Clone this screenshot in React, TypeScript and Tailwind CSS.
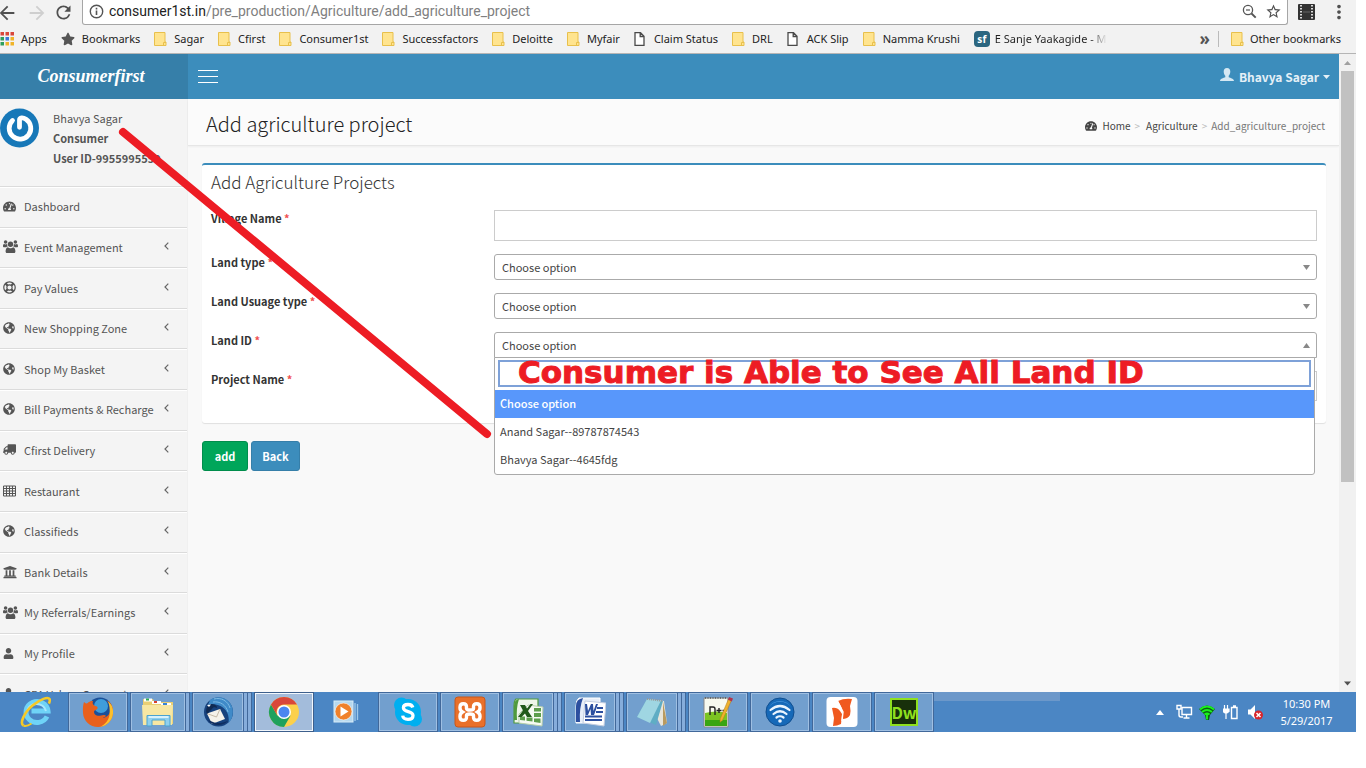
import type { ReactNode } from "react";
import {
  FaTachometerAlt,
  FaRegLifeRing,
  FaGlobeAmericas,
  FaTruck,
  FaUniversity,
  FaUser,
  FaStar,
} from "react-icons/fa";
import { MdArrowBack, MdArrowForward, MdRefresh, MdStarBorder, MdMoreVert } from "react-icons/md";

function FolderIcon() {
  return (
    <svg className="h-[14px] w-[13px] shrink-0" viewBox="0 0 13 14">
      <path d="M.5.5h10.500v9.500h1v3.500H.5z" fill="#ffe48f" stroke="#e8c04c" />
      <path d="M9.500 13.500v-3h2.500" fill="none" stroke="#e8c04c" />
    </svg>
  );
}

function PageIcon() {
  return (
    <svg className="h-[14px] w-[13px] shrink-0" viewBox="0 0 13 14">
      <path d="M1 .7h5.500L10 4.200v9.100H1zM6.200.7v3.800H10" fill="#fff" stroke="#4a4a4a" strokeWidth="1.300" />
    </svg>
  );
}

function AppsIcon() {
  const colors = ["#d9473b", "#d9473b", "#d9473b", "#2f9e5b", "#3b78d8", "#f0b429", "#2f9e5b", "#f0b429", "#f0b429"];
  return (
    <svg className="h-[14px] w-[14px] shrink-0" viewBox="0 0 14 14">
      {colors.map((c, i) => (
        <rect key={i} x={(i % 3) * 5 + 0.5} y={Math.floor(i / 3) * 5} width="3.500" height="3.500" fill={c} />
      ))}
    </svg>
  );
}

function SfIcon() {
  return (
    <span className="flex size-4 shrink-0 items-center justify-center rounded-sm bg-[#2b6680] text-[10px] leading-none font-bold text-white">
      sf
    </span>
  );
}

function GridIcon() {
  return (
    <svg className="h-3 w-[13px]" viewBox="0 0 13 12">
      <path
        d="M.5 1h12v10H.5zM.5 3.500h12M.5 6h12M.5 8.500h12M3.500 1v10M6.500 1v10M9.500 1v10"
        fill="none"
        stroke="#555"
      />
    </svg>
  );
}

function UsersIcon() {
  return (
    <svg className="h-[13px] w-[15px]" viewBox="0 0 15 13" fill="#555">
      <circle cx="7.500" cy="4.300" r="2.700" />
      <path d="M4 13c-1 0-1.400-.7-1.400-1.500 0-2 .6-4.300 2.300-4.300.8.8 1.700 1 2.600 1s1.800-.2 2.600-1c1.700 0 2.300 2.300 2.300 4.300 0 .8-.4 1.500-1.400 1.500z" />
      <circle cx="2.600" cy="2" r="1.800" />
      <circle cx="12.400" cy="2" r="1.800" />
      <path d="M0 6.300C0 4.900.4 4 1.100 4c.8.6 2 .6 2.900.1 0 1 .3 1.700.8 2.300-.9.1-1.400.4-1.700.9H1.200C.4 7.300 0 7 0 6.300z" />
      <path d="M15 6.300c0-1.400-.4-2.300-1.100-2.300-.8.6-2 .6-2.900.1 0 1-.3 1.700-.8 2.300.9.1 1.400.4 1.700.9h1.900c.8 0 1.200-.3 1.200-1z" />
    </svg>
  );
}

const bookmarks: { label: string; icon: ReactNode }[] = [
  { label: "Apps", icon: <AppsIcon /> },
  { label: "Bookmarks", icon: <FaStar className="size-[14px] text-[#555]" /> },
  { label: "Sagar", icon: <FolderIcon /> },
  { label: "Cfirst", icon: <FolderIcon /> },
  { label: "Consumer1st", icon: <FolderIcon /> },
  { label: "Successfactors", icon: <FolderIcon /> },
  { label: "Deloitte", icon: <FolderIcon /> },
  { label: "Myfair", icon: <FolderIcon /> },
  { label: "Claim Status", icon: <PageIcon /> },
  { label: "DRL", icon: <FolderIcon /> },
  { label: "ACK Slip", icon: <PageIcon /> },
  { label: "Namma Krushi", icon: <FolderIcon /> },
];

function BrowserChrome() {
  return (
    <header className="flex h-[54px] shrink-0 flex-col border-b border-[#b5b5b5] bg-[#f2f2f2] font-['Noto_Sans',sans-serif]">
      <div className="flex h-[25px] items-center text-[#505050]">
        <div className="flex h-[22px] w-[82px] items-center">
          <button aria-label="Back" className="-ml-1 w-[30px]">
            <MdArrowBack className="size-[22px]" />
          </button>
          <button aria-label="Forward" className="w-[27px] text-[#cfcfcf]">
            <MdArrowForward className="size-[22px]" />
          </button>
          <button aria-label="Reload">
            <MdRefresh className="size-[21px]" />
          </button>
        </div>
        <div className="flex h-full grow items-center rounded-b-[3px] border border-t-0 border-[#a6a6a6] bg-white pr-[5px] pb-0.5 pl-1.5">
          <svg className="size-[15px] shrink-0" viewBox="0 0 15 15">
            <circle cx="7.500" cy="7.500" r="6.200" fill="none" stroke="#555" strokeWidth="1.400" />
            <path d="M7.500 6.500v4.500M7.500 3.800v1.600" stroke="#555" strokeWidth="1.600" />
          </svg>
          <p className="grow pl-[5px] font-[Roboto,sans-serif] text-[14px] leading-5 text-[#808080]">
            <span className="text-[#222]">consumer1st.in</span>/pre_production/Agriculture/add_agriculture_project
          </p>
          <button aria-label="Zoom" className="mr-2">
            <svg className="size-[15px]" viewBox="0 0 15 15">
              <circle cx="6" cy="6" r="4.600" fill="none" stroke="#555" strokeWidth="1.300" />
              <path d="M9.500 9.500l4.200 4.200" stroke="#555" strokeWidth="1.900" />
              <path d="M4 6h4" stroke="#555" strokeWidth="1.200" />
            </svg>
          </button>
          <button aria-label="Bookmark this page">
            <MdStarBorder className="size-[17px]" />
          </button>
        </div>
        <div className="flex w-[68px] items-center justify-between pb-0.5 pl-2.5">
          <button aria-label="Extension">
            <svg className="h-4 w-[17px]" viewBox="0 0 17 16">
              <rect width="17" height="16" rx="1" fill="#333" />
              <path d="M3 1v15M14 1v15" stroke="#eee" strokeWidth="1.800" strokeDasharray="1.600 1.400" />
              <path d="M5 8h7" stroke="#666" />
            </svg>
          </button>
          <button aria-label="Menu" className="mr-1.5">
            <MdMoreVert className="size-[22px]" />
          </button>
        </div>
      </div>
      <nav aria-label="Bookmarks" className="flex grow items-center text-[11px] leading-4 text-[#222]">
        <ul className="flex grow items-center gap-[14px] whitespace-nowrap">
          {bookmarks.map((b) => (
            <li key={b.label}>
              <a href="#" className="flex items-center gap-[7px]">
                {b.icon}
                {b.label}
              </a>
            </li>
          ))}
          <li>
            <a href="#" className="flex items-center gap-[5px]">
              <SfIcon />
              <span className="bg-linear-to-r from-[#222] from-85% to-transparent bg-clip-text text-transparent">
                E Sanje Yaakagide - M
              </span>
            </a>
          </li>
        </ul>
        <button aria-label="More bookmarks" className="mr-2 text-[17px] leading-4 font-bold text-[#555]">
          »
        </button>
        <a href="#" className="mr-[15px] flex items-center gap-1.5 border-l border-[#bbb] pl-3">
          <FolderIcon />
          Other bookmarks
        </a>
      </nav>
    </header>
  );
}

const menu: { label: string; icon: ReactNode; leaf?: boolean }[] = [
  { label: "Dashboard", icon: <FaTachometerAlt className="size-[13px]" />, leaf: true },
  { label: "Event Management", icon: <UsersIcon /> },
  { label: "Pay Values", icon: <FaRegLifeRing className="size-[13px]" /> },
  { label: "New Shopping Zone", icon: <FaGlobeAmericas className="size-3" /> },
  { label: "Shop My Basket", icon: <FaGlobeAmericas className="size-3" /> },
  { label: "Bill Payments & Recharge", icon: <FaGlobeAmericas className="size-3" /> },
  { label: "Cfirst Delivery", icon: <FaTruck className="size-[13px] -scale-x-100" /> },
  { label: "Restaurant", icon: <GridIcon /> },
  { label: "Classifieds", icon: <FaGlobeAmericas className="size-3" /> },
  { label: "Bank Details", icon: <FaUniversity className="size-[14px]" /> },
  { label: "My Referrals/Earnings", icon: <UsersIcon /> },
  { label: "My Profile", icon: <FaUser className="size-[11px]" /> },
  { label: "CPA Values Comparison", icon: <FaUser className="size-[11px]" /> },
];

function Sidebar() {
  return (
    <aside className="w-[188px] shrink-0 overflow-hidden border-r border-[#f0f0f0] bg-[#f4f4f4] text-[11px] text-[#555]">
      <div className="flex h-[88px] gap-[13px] border-b border-[#dbdbdb] pt-[9px]">
        <svg className="size-10 shrink-0" viewBox="0 0 40 40">
          <circle cx="19.500" cy="20" r="19.500" fill="#1778b8" />
          <path
            d="M12.500 12.500a10.800 10.800 0 1 0 13.500-1.200c-3-2-6.500-2-6.500 1v7"
            fill="none"
            stroke="#fff"
            strokeWidth="4.800"
            strokeLinecap="round"
          />
        </svg>
        <div className="leading-5 whitespace-nowrap">
          <p>Bhavya Sagar</p>
          <p className="font-bold">Consumer</p>
          <p className="font-bold">User ID-9955995559</p>
        </div>
      </div>
      <ul className="grid h-[528px] auto-rows-fr">
        {menu.map((m) => (
          <li key={m.label} className="border-t border-b border-t-white border-b-[#dbdbdb]">
            <a href="#" className="flex h-full items-center pb-0.5 whitespace-nowrap">
              <span className="flex w-6 shrink-0 pl-[3px]">{m.icon}</span>
              <span className="grow leading-5">{m.label}</span>
              {!m.leaf && (
                <svg className="mr-[18px] mb-0.5 h-2 w-[5px] shrink-0" viewBox="0 0 5 8">
                  <path d="M4.300.7L1 4l3.300 3.300" fill="none" stroke="#666" strokeWidth="1.200" />
                </svg>
              )}
            </a>
          </li>
        ))}
      </ul>
    </aside>
  );
}

function Label({ id, text }: { id: string; text: string }) {
  return (
    <label htmlFor={id} className="w-[283px] shrink-0 leading-4 font-bold text-[#333]">
      {text} <span className="text-[#f05050]">*</span>
    </label>
  );
}

function SelectField({ id, text, open, children }: { id: string; text: string; open?: boolean; children?: ReactNode }) {
  return (
    <div className="flex">
      <Label id={id} text={text} />
      <div className="relative grow">
        <select
          id={id}
          className={
            open
              ? "h-[26px] w-full appearance-none rounded-t-[3px] border border-[#aaa] bg-white pl-[7px] leading-5 text-[#444]"
              : "h-[26px] w-full appearance-none rounded-[3px] border border-[#aaa] bg-white pl-[7px] leading-5 text-[#444]"
          }
        >
          <option>Choose option</option>
        </select>
        <svg className="pointer-events-none absolute top-[11px] right-[7px] h-[5px] w-[7px]" viewBox="0 0 7 5">
          <path d={open ? "M0 5h7L3.500 0z" : "M0 0h7L3.500 5z"} fill="#888" />
        </svg>
        {children}
      </div>
    </div>
  );
}

function LandIdMenu() {
  return (
    <div className="absolute top-[25px] right-[2px] left-0 z-10 rounded-b-[3px] border border-[#aaa] bg-white">
      <div className="relative mx-[3px] mt-[2px] mb-[3px]">
        <input
          type="search"
          aria-label="Search land ID"
          className="block h-[27px] w-full border-2 border-[#7ea1d8] bg-white px-1 outline-none"
        />
        <span className="absolute top-0 left-5 font-['DejaVu_Sans',sans-serif] text-[31px] leading-6 font-bold whitespace-nowrap text-[#ed1c24] [-webkit-text-stroke:1px_#ed1c24]">
          Consumer is Able to See All Land ID
        </span>
      </div>
      <ul role="listbox" aria-label="Land ID options" className="leading-[26px] text-[#444]">
        <li role="option" aria-selected="true" className="h-7 bg-[#5897fb] pl-[5px] font-medium text-white">
          Choose option
        </li>
        <li role="option" aria-selected="false" className="h-7 pl-[5px]">
          Anand Sagar--89787874543
        </li>
        <li role="option" aria-selected="false" className="h-7 pl-[5px]">
          Bhavya Sagar--4645fdg
        </li>
      </ul>
    </div>
  );
}

function Content() {
  return (
    <main className="min-w-0 grow bg-[#f9f9f9]">
      <div className="flex h-[47px] items-center justify-between border-b border-[#e6e6e6] bg-[#fbfbfb] pr-[14px] pl-[18px] shadow-xs">
        <h1 className="mt-1 text-[20px] leading-6 font-light text-[#222]">Add agriculture project</h1>
        <nav aria-label="Breadcrumb" className="mt-2 text-[10px] leading-4 text-[#444]">
          <ol className="flex items-center">
            <li className="flex items-center">
              <FaTachometerAlt className="mr-[5px] size-3" />
              <a href="#">Home</a>
              <span className="mr-1.5 ml-1 text-[#bbb]">&gt;</span>
            </li>
            <li>
              <a href="#">Agriculture</a>
              <span className="mr-1 ml-1 text-[#bbb]">&gt;</span>
            </li>
            <li className="text-[#777]">Add_agriculture_project</li>
          </ol>
        </nav>
      </div>
      <form className="px-[13px] pt-[17px] pl-[14px] text-[11px]" onSubmit={(e) => e.preventDefault()}>
        <section className="rounded-[3px] border-t-2 border-[#3c8dbc] bg-white pr-[9px] pb-[22px] pl-[9px] shadow-[0_1px_1px_rgba(0,0,0,0.1)]">
          <h2 className="pt-[7px] pb-[18px] text-[17px] leading-5 font-light text-[#333]">Add Agriculture Projects</h2>
          <div className="flex flex-col gap-[13px]">
            <div className="flex">
              <Label id="village" text="Village Name" />
              <input id="village" type="text" className="h-[31px] grow border border-[#ccc] bg-white px-2" />
            </div>
            <SelectField id="land-type" text="Land type" />
            <SelectField id="land-usage" text="Land Usuage type" />
            <SelectField id="land-id" text="Land ID" open>
              <LandIdMenu />
            </SelectField>
            <div className="flex">
              <Label id="project" text="Project Name" />
              <input id="project" type="text" className="h-[30px] grow border border-[#ccc] bg-white px-2" />
            </div>
          </div>
        </section>
        <div className="flex gap-[3px] pt-[18px] text-white">
          <button className="h-[30px] w-[46px] rounded-[3px] border border-[#008d4c] bg-[#00a65a] font-bold">add</button>
          <button type="button" className="h-[30px] w-[49px] rounded-[3px] border border-[#367fa9] bg-[#3c8dbc] font-bold">
            Back
          </button>
        </div>
      </form>
    </main>
  );
}

function Scrollbar() {
  return (
    <div aria-hidden="true" className="flex w-[17px] shrink-0 flex-col items-center justify-between bg-[#f1f1f1]">
      <div className="flex h-[428px] w-full flex-col items-center">
        <svg className="h-[17px] w-[9px] shrink-0" viewBox="0 0 9 17">
          <path d="M1 11h7L4.500 7z" fill="#a0a0a0" />
        </svg>
        <div className="w-[13px] grow bg-[#c1c1c1]" />
      </div>
      <svg className="h-[17px] w-[9px]" viewBox="0 0 9 17">
        <path d="M1 6.500h7L4.500 10.500z" fill="#505050" />
      </svg>
    </div>
  );
}

function IeIcon() {
  return (
    <svg className="size-8" viewBox="0 0 32 32">
      <path
        d="M27 20.500a11 10.500 0 1 1 1-5.500H11.500"
        fill="none"
        stroke="#6fd3f7"
        strokeWidth="5"
      />
      <path d="M7 15a10 10 0 0 1 19 0" fill="none" stroke="#a9e8fc" strokeWidth="2" />
      <path
        d="M3.500 29.500c-4-2 .5-13 9-20C20.500 3 28 .5 29.500 3c.6 1 .3 2.600-.6 4.600"
        fill="none"
        stroke="#f6c926"
        strokeWidth="2.600"
      />
      <path d="M3.500 29.500c2 1 5 0 8-2" fill="none" stroke="#f6c926" strokeWidth="2" />
    </svg>
  );
}

function FirefoxIcon() {
  return (
    <svg className="size-8" viewBox="0 0 32 32">
      <circle cx="18" cy="14" r="12.500" fill="#1b4f98" />
      <circle cx="19" cy="10" r="7" fill="#3f9ddb" />
      <path
        d="M2 6c1 1 2 1.500 3 1.500C7 5.500 9 5 11 5c-1 2 0 4 2 5 2 .4 3 1 2.500 2.500-.8 1.500-3 1.500-3.500 3 0 4 4 5 7 4 2-.7 4-1 5 .5-1 1-3 1.500-3 2 5-1 7.500-5 7.500-9 0-4-2-7-4-8.500C29 6 31.500 11 31 17c-.6 8-7 14-15 14C8 31 1.500 25 1 17 .7 12 1 9 2 6z"
        fill="#e8601c"
      />
      <path d="M26 5.500c4 3 5.500 7 5 12-.7 7-6 12.500-13 13.400 6-3 9-7.500 9.600-13C28 13 27.500 9 26 5.500z" fill="#fbc02d" />
    </svg>
  );
}

function ExplorerIcon() {
  return (
    <svg className="h-8 w-[34px]" viewBox="0 0 34 32">
      <path d="M2 3h10l1 3h19v22H2z" fill="#e9cf73" />
      <path d="M3 2.500h8v3H3z" fill="#fff" />
      <path d="M5 2.500h3v2H5z" fill="#2fa84f" />
      <path d="M11 5h9v3h-9z" fill="#fff" />
      <path d="M13 5h3v2h-3z" fill="#d9432f" />
      <path d="M20 7h10v3H20z" fill="#fff" />
      <path d="M22 7h4v2h-4z" fill="#3784d6" />
      <path d="M1 9h31l-1 20H2z" fill="#f7e7a3" />
      <path d="M6 30V19.500h23V30h-5v-6H11v6z" fill="#8fd0ee" stroke="#4aa3d0" />
      <path d="M7.500 21h20" stroke="#d7f1fb" strokeWidth="2" />
    </svg>
  );
}

function ThunderbirdIcon() {
  return (
    <svg className="size-8" viewBox="0 0 32 32">
      <circle cx="16.500" cy="16" r="14.500" fill="#17427d" />
      <path d="M8 4c8-6 20-2 22.500 8 1 6 0 11-4 15 1-7-1-13-8-17C14 8 10 8 6 9z" fill="#3f8ac8" />
      <path d="M12 3c7-2 14 2 16 9M11 6c7-1 13 3 15 10" fill="none" stroke="#7db9e3" />
      <path d="M5 17.500L18 13l5 10-13 5z" fill="#f5f2ea" />
      <path d="M5 17.500l9.500 3.500L18 13" fill="none" stroke="#c5baa8" />
      <path d="M5 18c-2-4 0-9 4-10 3 0 6 1 6 4-2-1-4-1-5 1z" fill="#102a52" />
      <path d="M5 9l4-.5-2 2.500z" fill="#fff" />
      <path d="M6 24c4 6 14 7 20 1-5 2-11 3-15 1z" fill="#0f2d5e" />
    </svg>
  );
}

function ChromeIcon() {
  return (
    <svg className="size-8" viewBox="0 0 32 32">
      <circle cx="16" cy="16" r="15" fill="#fcd04b" />
      <path d="M3 8.500A15 15 0 0 0 16 31l6.500-11.300L16 16l-6.500 3.700z" fill="#1fa15d" />
      <path d="M3 8.500A15 15 0 0 1 29 8.500H16a7.500 7.500 0 0 0-6.800 10.700z" fill="#d9463a" />
      <circle cx="16" cy="16" r="7" fill="#fff" />
      <circle cx="16" cy="16" r="5.500" fill="#4a86f0" />
    </svg>
  );
}

function MediaIcon() {
  return (
    <svg className="h-6 w-[26px]" viewBox="0 0 26 24">
      <path d="M22 3v18M24.500 4v16" stroke="#9ec9ea" strokeWidth="1.300" />
      <rect x="1" y="1" width="19" height="21" fill="#b5d8ef" stroke="#d9edf8" />
      <circle cx="10.500" cy="11.500" r="8.500" fill="#f0812b" stroke="#fff" strokeWidth=".6" />
      <path d="M7.500 6.500v10l8-5z" fill="#fff" />
    </svg>
  );
}

function SkypeIcon() {
  return (
    <svg className="h-8 w-[30px]" viewBox="0 0 30 32">
      <circle cx="15" cy="16" r="13" fill="#00aff0" />
      <circle cx="8.500" cy="9" r="7.500" fill="#00aff0" />
      <circle cx="21.500" cy="23" r="7.500" fill="#00aff0" />
      <path
        d="M19.800 11.500c-.5-2-2.300-3-4.800-3-2.800 0-4.600 1.300-4.600 3.300 0 4.900 9.600 2.600 9.600 7.600 0 2.500-2.100 3.900-5 3.900-2.800 0-5-1.200-5.300-3.700"
        fill="none"
        stroke="#fff"
        strokeWidth="3.300"
      />
    </svg>
  );
}

function XamppIcon() {
  return (
    <svg className="size-8" viewBox="0 0 32 32">
      <rect x="1" y="1" width="30" height="30" rx="3" fill="#e9702a" stroke="#c9571a" />
      <path
        d="M12.500 12.500v-1.800q0-3-3.200-3T6 11v1q0 2.500 2.500 4Q6 17.500 6 20v1q0 3.300 3.300 3.300t3.200-3v-1.800q0-1.500 3.500-1.500t3.500 1.500v1.800q0 3 3.200 3T26 21v-1q0-2.500-2.500-4 2.500-1.500 2.500-4v-1q0-3.300-3.300-3.300t-3.200 3v1.800q0 1.500-3.500 1.500t-3.500-1.500z"
        fill="none"
        stroke="#fff"
        strokeWidth="3.400"
      />
    </svg>
  );
}

function ExcelIcon() {
  return (
    <svg className="size-8" viewBox="0 0 32 32">
      <path d="M4 3h22v24H2V10q0-5 2-7z" fill="#eef6ea" stroke="#4f9a3d" strokeWidth="1.200" />
      <path d="M2 24V10q0-6 5-7-3 9-2 21z" fill="#4f9a3d" />
      <path d="M16 9l15 2-1 19-23-3v-9z" fill="#f6faf3" stroke="#b6cfac" />
      <path d="M22 12h7v3.500h-7zM22 17h7v4h-7zM22 22.500h6.500V27L22 26zM14.500 21.500h6v4l-6-.7zM8 20.500h5v4l-5-.6z" fill="#5d9e4c" />
      <path d="M8 9h5l2 3.500L18.500 8H21l-5 7 4 6h-5l-2-3.500L9.500 21H6l5-6.500z" fill="#215a1a" />
    </svg>
  );
}

function WordIcon() {
  return (
    <svg className="size-8" viewBox="0 0 32 32">
      <path d="M5 2h21v25H2V10q0-6 3-8z" fill="#e8eef8" stroke="#fff" />
      <path d="M2 26V10q0-7 7-8-4 10-3 24z" fill="#2c4f9f" />
      <path d="M11 5l21 2-2 23-21-3z" fill="#fff" stroke="#c2cde0" />
      <path d="M11 8h2l1 7 3-7h2l.5 7 2.500-7h2l-4 11h-3l-.5-6-2.500 6h-2.500z" fill="#2c4f9f" />
      <path d="M23 12h6M22 16h7M11 20.500h17M11 24h17" stroke="#2c4f9f" strokeWidth="1.800" />
    </svg>
  );
}

function NotepadIcon() {
  return (
    <svg className="size-8" viewBox="0 0 32 32">
      <path d="M11 3l17 2 3 22-6 3z" fill="#e8e5da" />
      <path d="M27 6l4 21-4 3z" fill="#b89a60" />
      <path d="M11 3l16 2-7 24-19-8z" fill="#5fadc4" />
      <path d="M11 3l14 1.500L14 27 1 21z" fill="#9fd6e2" />
      <path d="M11 3l16 2" stroke="#999" strokeWidth="2" strokeDasharray="1 1" />
    </svg>
  );
}

function NppIcon() {
  return (
    <svg className="h-8 w-[30px]" viewBox="0 0 30 32">
      <path d="M1 2h24v29H1z" fill="#f7f9ee" stroke="#888" />
      <path d="M2 17q11-3 22 0v13H2z" fill="#7cc422" />
      <path d="M2 24h22v6H2z" fill="#39a512" />
      <path d="M2 2h22" stroke="#555" strokeWidth="1.600" strokeDasharray="1 1.500" />
      <path d="M7 19v-8h3q2 0 2 2v6M13.500 14.500h5M16 12v5M19.500 14.500h4" fill="none" stroke="#222" strokeWidth="1.400" />
      <path d="M25.500 3l3 1.300-9 20-2.500 2 .2-3.600z" fill="#eeb12c" stroke="#b37a12" strokeWidth=".5" />
      <path d="M26 1l4 1.500-1.200 3-3.800-1.700z" fill="#b3344a" />
    </svg>
  );
}

function WifiAppIcon() {
  return (
    <svg className="size-[30px]" viewBox="0 0 30 30">
      <circle cx="15" cy="15" r="14" fill="#1669b8" stroke="#114f90" />
      <path d="M4 10a14 14 0 0 1 22 0A13 13 0 0 0 4 10z" fill="#4c9be0" />
      <path
        d="M5.500 13q9.500-8 19 0M8.500 17q6.500-5.500 13 0M11.500 20.500q3.500-2.500 7 0"
        fill="none"
        stroke="#eaf5ff"
        strokeWidth="2.200"
        strokeLinecap="round"
      />
      <circle cx="15" cy="24" r="1.800" fill="#eaf5ff" />
    </svg>
  );
}

function NitroIcon() {
  return (
    <svg className="size-8" viewBox="0 0 32 32">
      <rect x=".5" y="1" width="31" height="30" rx="4" fill="#fff" />
      <path d="M6 12q5-1 8 3l2 3-1 10q-4 2-8 2l1-8-1-5z" fill="#f0591f" />
      <path d="M12 5q6-3 14-2l-2 7q1 5 0 9-2 4-8 4 0-3 1-6-1-6-5-12z" fill="#f0591f" />
      <path d="M11 4l6 12-1 9" fill="none" stroke="#fff" strokeWidth="1.400" />
    </svg>
  );
}

function DwIcon() {
  return (
    <span className="flex size-7 items-center justify-center border-2 border-[#8fe01f] bg-[#18300b] font-['Noto_Sans_CJK_SC',sans-serif] text-[16px] leading-none font-bold text-[#8fe01f]">
      Dw
    </span>
  );
}

type Task = { name: string; icon: ReactNode; kind: "plain" | "open" | "active"; stack?: number };

const tasks: Task[] = [
  { name: "Internet Explorer", icon: <IeIcon />, kind: "plain" },
  { name: "Firefox", icon: <FirefoxIcon />, kind: "open" },
  { name: "File Explorer", icon: <ExplorerIcon />, kind: "open", stack: 1 },
  { name: "Thunderbird", icon: <ThunderbirdIcon />, kind: "open", stack: 2 },
  { name: "Chrome", icon: <ChromeIcon />, kind: "active" },
  { name: "Media Player", icon: <MediaIcon />, kind: "plain" },
  { name: "Skype", icon: <SkypeIcon />, kind: "open" },
  { name: "XAMPP", icon: <XamppIcon />, kind: "open" },
  { name: "Excel", icon: <ExcelIcon />, kind: "open", stack: 2 },
  { name: "Word", icon: <WordIcon />, kind: "open", stack: 2 },
  { name: "Notepad", icon: <NotepadIcon />, kind: "open", stack: 2 },
  { name: "Notepad++", icon: <NppIcon />, kind: "open" },
  { name: "Wi-Fi", icon: <WifiAppIcon />, kind: "open" },
  { name: "Nitro", icon: <NitroIcon />, kind: "open" },
  { name: "Dreamweaver", icon: <DwIcon />, kind: "open" },
];

const taskStyle = {
  plain: "flex h-10 grow items-center justify-center",
  open: "flex h-10 grow items-center justify-center border border-[#41689a] bg-[#729fce] shadow-[inset_0_0_0_1px_#9fbfe2]",
  active: "flex h-10 grow items-center justify-center border border-[#3d5f8c] bg-[#a3bcdb] shadow-[inset_0_0_0_1px_#f2f7fc]",
};

function Taskbar() {
  return (
    <footer className="flex h-10 shrink-0 items-center justify-between bg-[#4b86c4] font-['Noto_Sans',sans-serif] text-white">
      <div className="relative flex gap-0.5 pl-1.5">
        {tasks.map((t) => (
          <div key={t.name} className="flex w-[60px]">
            <button aria-label={t.name} className={taskStyle[t.kind]}>
              {t.icon}
            </button>
            {Array.from({ length: t.stack ?? 0 }, (_, i) => (
              <span key={i} className="h-10 w-1 border border-l-0 border-[#41689a] bg-[#86addb]" />
            ))}
          </div>
        ))}
        <span className="absolute top-0 left-[934px] h-[9px] w-[126px] bg-[#6c98ca]" />
      </div>
      <div className="flex items-center">
        <svg className="mr-3 h-[5px] w-2" viewBox="0 0 8 5">
          <path d="M0 5h8L4 0z" fill="#fff" />
        </svg>
        <svg className="mr-1.5 h-4 w-[17px]" viewBox="0 0 17 16">
          <path d="M6 3.500h9.500v7H6zM10.500 10.500v3M7.500 14h6" fill="none" stroke="#fff" strokeWidth="1.400" />
          <path d="M1 1.500h4v3.500H1zM3 5v6q0 2 2 2h2" fill="none" stroke="#fff" strokeWidth="1.400" />
        </svg>
        <svg className="mr-2 size-4" viewBox="0 0 16 16">
          <path d="M0 5q8-7 16 0l-5 6-1 5H7l-1-5z" fill="#0a5c12" />
          <path d="M1 5.500q7-6 14 0M3 8q5-4 10 0M5.500 10.500q2.500-2 5 0M8 10v5.500" fill="none" stroke="#1bf01b" strokeWidth="1.900" />
        </svg>
        <svg className="mr-[9px] size-4" viewBox="0 0 16 16">
          <path d="M8.500 3.500H14v11H8.500zM10 2h3" fill="none" stroke="#fff" strokeWidth="1.400" />
          <path d="M1.500 1v4M4.500 1v4M0 5h6v2.500L4 9H2L0 7.500zM3 9v6" fill="#fff" stroke="#fff" strokeWidth="1.200" />
        </svg>
        <svg className="h-4 w-[15px]" viewBox="0 0 15 16">
          <path d="M0 5.500h2.500L7 1v14l-4.500-4.500H0z" fill="#fff" />
          <circle cx="10.500" cy="11" r="4.500" fill="#d8262c" />
          <path d="M8.500 9l4 4M12.500 9l-4 4" stroke="#fff" strokeWidth="1.500" />
        </svg>
        <p className="mr-1.5 w-[87px] text-center text-[11px] leading-[17px]">
          10:30 PM
          <br />
          5/29/2017
        </p>
      </div>
    </footer>
  );
}

export default function App() {
  return (
    <div className="relative flex h-screen flex-col overflow-hidden bg-white pr-2.5 pb-9 font-['Noto_Sans_CJK_SC',sans-serif]">
      <BrowserChrome />
      <div className="flex min-h-0 grow">
        <div className="flex min-w-0 grow flex-col">
          <div className="flex h-[45px] shrink-0 items-center bg-[#3c8dbc] text-white">
            <a
              href="#"
              className="flex h-full w-[188px] items-center justify-center bg-[#367fa9] pr-1.5 font-['Liberation_Serif',serif] text-[18px] font-bold italic"
            >
              Consumerfirst
            </a>
            <button aria-label="Toggle navigation" className="ml-2.5 flex w-5 flex-col gap-[5px]">
              <span className="h-px bg-white" />
              <span className="h-px bg-white" />
              <span className="h-px bg-white" />
            </button>
            <button className="mr-[9px] ml-auto flex items-center text-[12px] leading-5 font-bold text-[#e4f0f7]">
              <svg className="mr-[5px] mb-1 h-[13px] w-[14px]" viewBox="0 0 14 13">
                <path
                  d="M7 0c2.300 0 3.300 1.500 3.300 3.600S9.300 7.300 8.700 7.800v1.400c1.800.8 5.300 1.400 5.300 3.800H0c0-2.400 3.500-3 5.300-3.800V7.800C4.700 7.300 3.700 5.700 3.700 3.600S4.700 0 7 0z"
                  fill="#d5e8f3"
                />
              </svg>
              Bhavya Sagar
              <svg className="ml-1 h-1 w-[7px]" viewBox="0 0 7 4">
                <path d="M0 0h7L3.500 4z" fill="#e4f0f7" />
              </svg>
            </button>
          </div>
          <div className="flex min-h-0 grow">
            <Sidebar />
            <Content />
          </div>
        </div>
        <Scrollbar />
      </div>
      <Taskbar />
      <svg
        aria-hidden="true"
        className="pointer-events-none absolute top-[127px] left-[117px] z-20 h-[312px] w-[375px]"
        viewBox="0 0 375 312"
      >
        <path d="M6 5L370 307" stroke="#ed1c24" strokeWidth="8" strokeLinecap="round" />
      </svg>
    </div>
  );
}
